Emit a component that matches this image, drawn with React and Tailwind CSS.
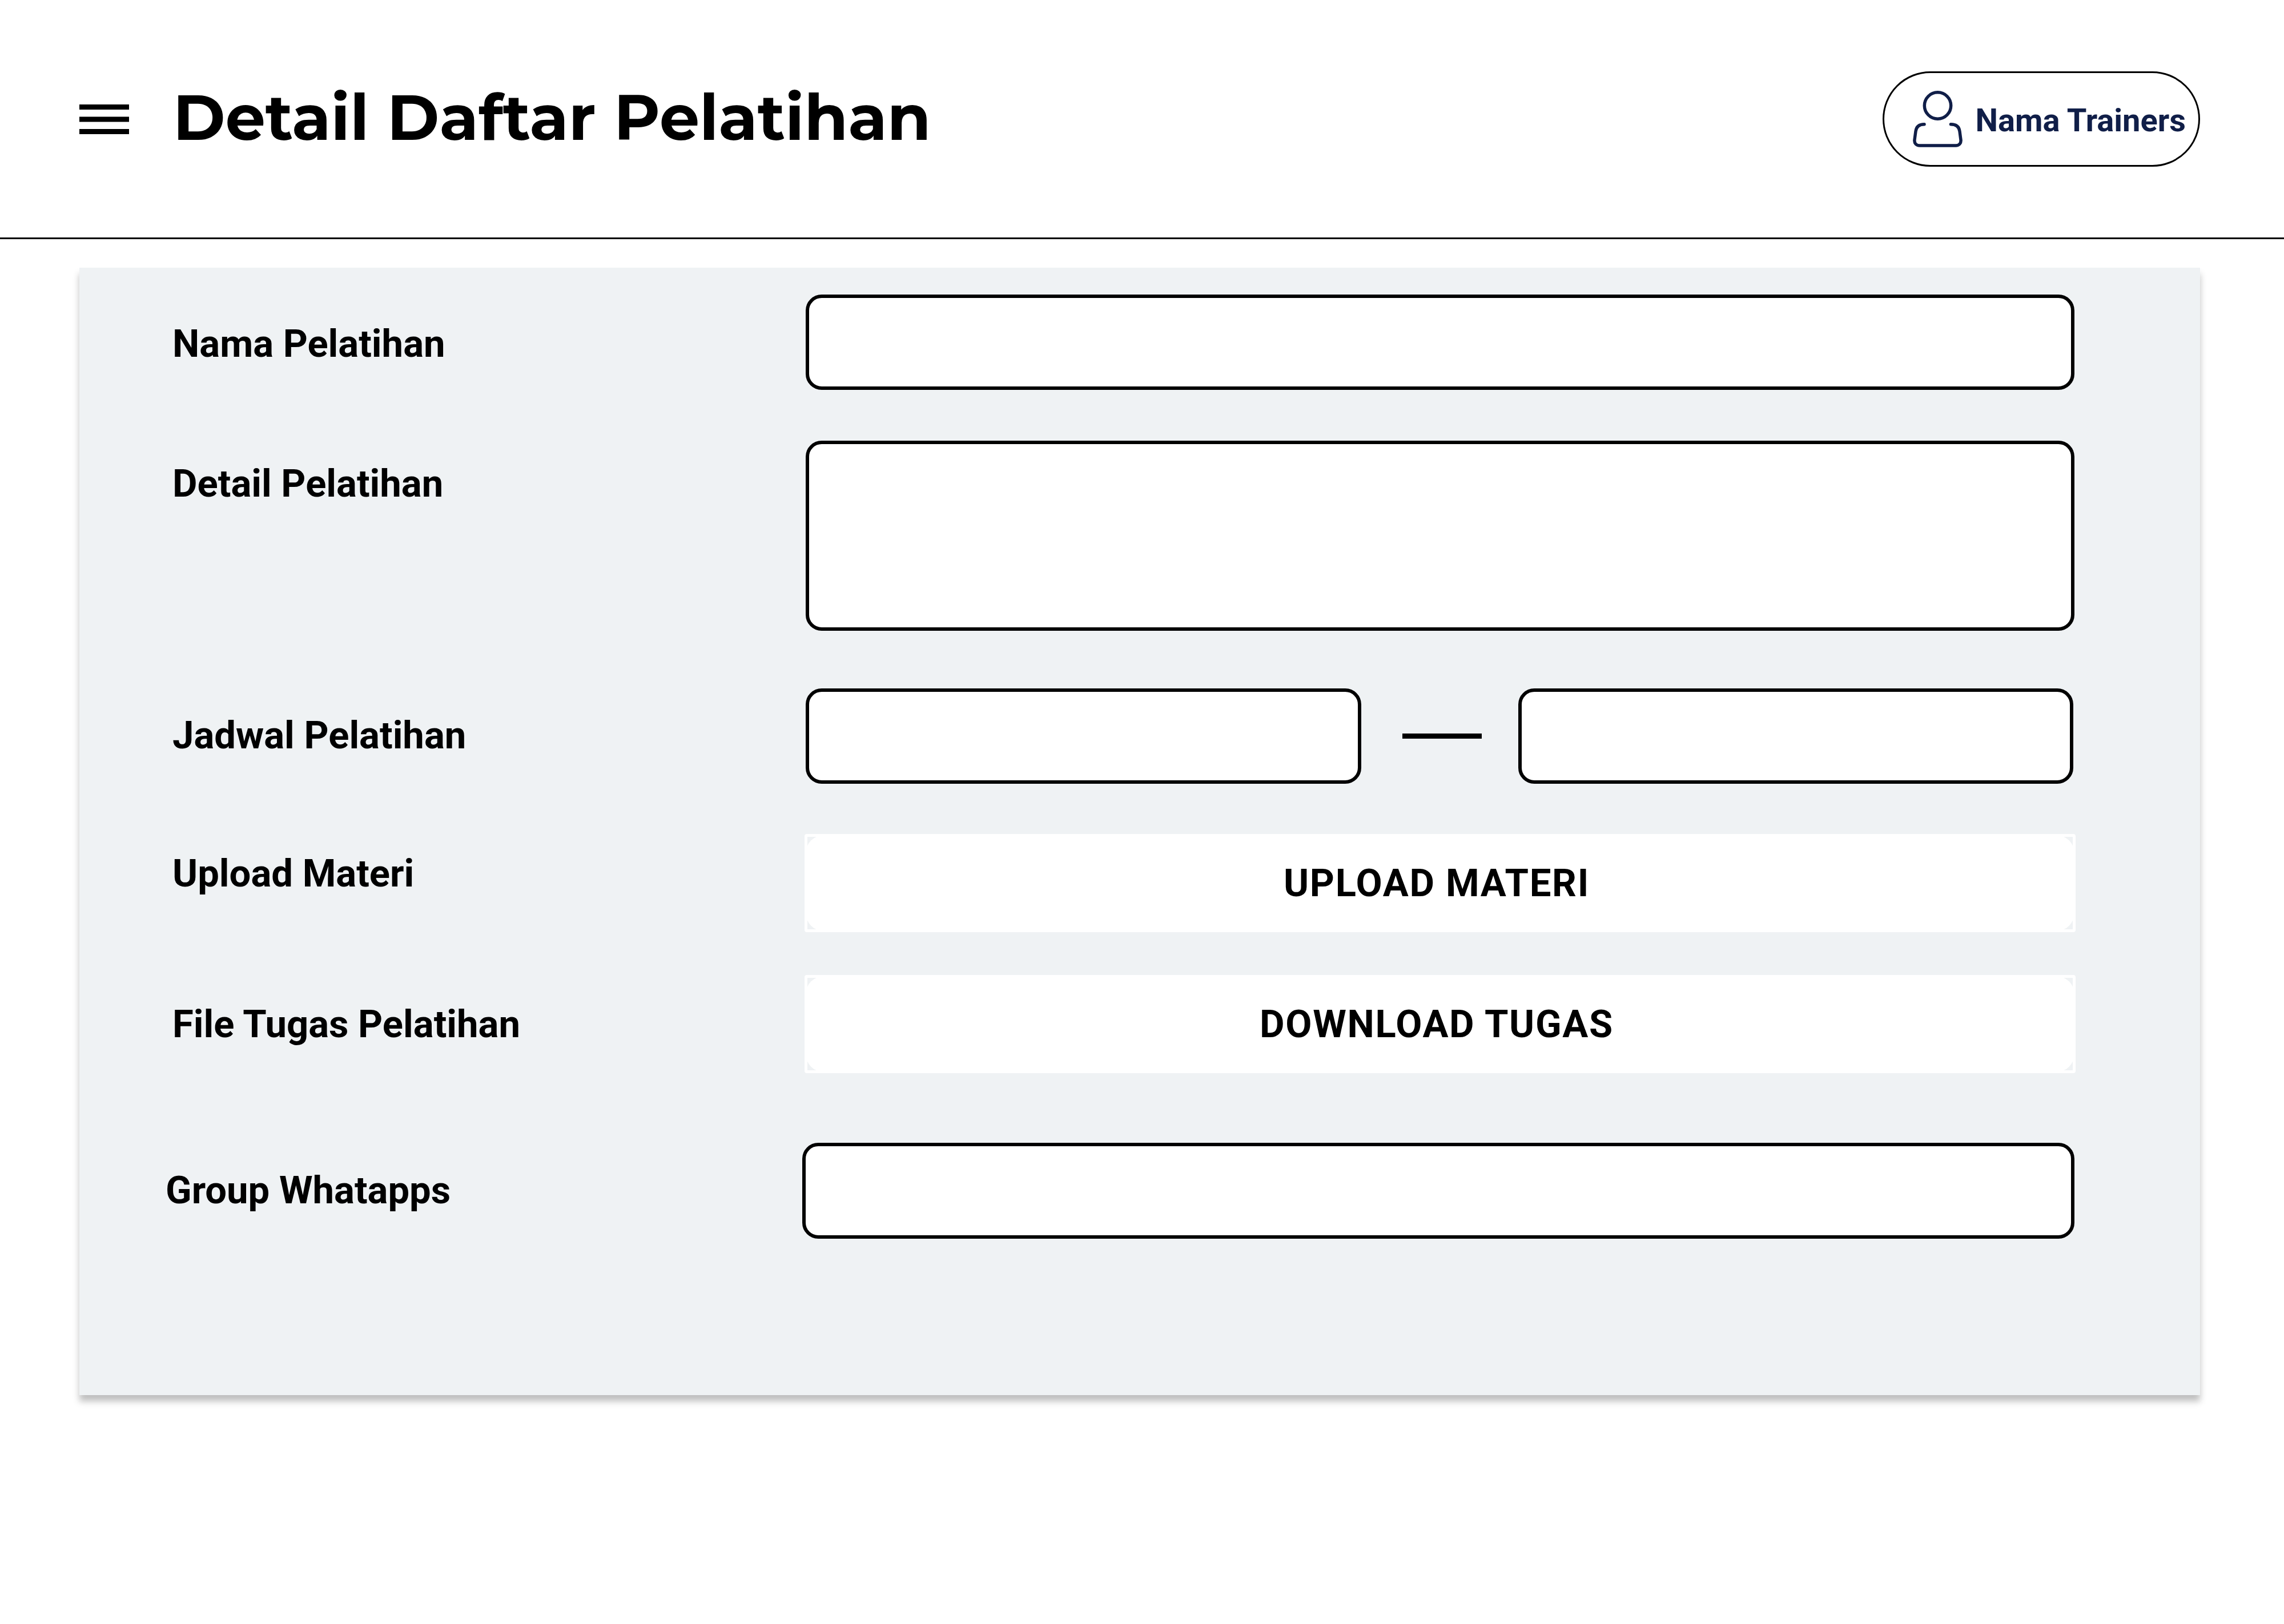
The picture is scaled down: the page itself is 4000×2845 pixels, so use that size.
function MenuIcon() {
  return (
    <svg viewBox="0 0 87 52" className="h-[52px] w-[87px]" fill="currentColor" aria-hidden="true">
      <rect width="87" height="9" />
      <rect y="21.5" width="87" height="9" />
      <rect y="43" width="87" height="9" />
    </svg>
  );
}

function UserIcon() {
  return (
    <svg
      viewBox="0 0 87 99"
      className="h-[99px] w-[87px] shrink-0"
      fill="none"
      stroke="currentColor"
      strokeWidth="5.5"
      strokeLinecap="round"
      aria-hidden="true"
    >
      <circle cx="43.5" cy="26" r="23.2" />
      <path d="M20 58.7C11 58.7 6 63 5 71L3 86C2.300 92 6 96 12 96H75C81 96 84.700 92 84 86L82 71C81 63 75.500 58.700 66.500 58.700" />
    </svg>
  );
}

const labelClass = "w-[1109px] shrink-0 text-[67px] leading-[80px] font-bold";
const boxClass = "block min-w-0 rounded-[28px] border-6 border-black bg-white px-10 text-[67px] outline-none";

function ActionButton({ id, children }) {
  return (
    <button
      id={id}
      type="button"
      className="-mx-0.5 flex h-[172px] flex-1 rounded-[4px] border-5 border-white text-[67px] leading-[80px] font-bold tracking-wide"
    >
      <span className="-m-[3px] flex flex-1 items-center justify-center self-stretch rounded-[32px] bg-white pr-3">
        {children}
      </span>
    </button>
  );
}

export default function App() {
  return (
    <div className="min-h-screen bg-white font-['Roboto',sans-serif] text-black">
      <header className="flex items-center justify-between border-b-3 border-black pt-[125px] pr-[147px] pb-[124px] pl-[139px]">
        <div className="flex items-center gap-[77px]">
          <button type="button" aria-label="Menu">
            <MenuIcon />
          </button>
          <h1 className="pb-1.5 font-['Montserrat','Inter',sans-serif] text-[111px] leading-[140px] font-bold">
            Detail Daftar Pelatihan
          </h1>
        </div>
        <button
          type="button"
          className="flex h-[167px] items-center gap-[22px] rounded-full border-3 border-black pr-[22px] pl-[50px] text-[56px] leading-[66px] font-bold text-[#101e48]"
        >
          <UserIcon />
          <span className="pt-1">Nama Trainers</span>
        </button>
      </header>

      <main className="mt-[50px] mr-[147px] ml-[139px] bg-[#eff2f4] shadow-[0_11px_11px_rgba(0,0,0,0.25)]">
        <form className="pt-[47px] pr-[220px] pb-[274px] pl-[163px]">
          <div className="flex items-start">
            <label htmlFor="nama" className={`${labelClass} mt-[46px]`}>Nama Pelatihan</label>
            <input id="nama" type="text" className={`${boxClass} h-[167px] flex-1`} />
          </div>
          <div className="mt-[89px] flex items-start">
            <label htmlFor="detail" className={`${labelClass} mt-[35px]`}>Detail Pelatihan</label>
            <textarea id="detail" className={`${boxClass} h-[333px] flex-1 resize-none py-6`} />
          </div>
          <div className="mt-[101px] flex items-start">
            <label htmlFor="mulai" className={`${labelClass} mt-[42px]`}>Jadwal Pelatihan</label>
            <div className="flex flex-1 items-center pr-0.5">
              <input id="mulai" type="text" className={`${boxClass} h-[167px] flex-1`} />
              <span className="mr-16 ml-[72px] h-[9px] w-[139px] bg-black" />
              <input id="selesai" type="text" aria-label="Jadwal selesai" className={`${boxClass} h-[167px] flex-1`} />
            </div>
          </div>
          <div className="mt-[88px] flex items-start">
            <label htmlFor="materi" className={`${labelClass} mt-[29px]`}>Upload Materi</label>
            <ActionButton id="materi">UPLOAD MATERI</ActionButton>
          </div>
          <div className="mt-[75px] flex items-start">
            <label htmlFor="tugas" className={`${labelClass} mt-[46px]`}>File Tugas Pelatihan</label>
            <ActionButton id="tugas">DOWNLOAD TUGAS</ActionButton>
          </div>
          <div className="mt-[122px] -ml-3 flex items-start">
            <label htmlFor="group" className="mt-[43px] w-[1115px] shrink-0 text-[67px] leading-[80px] font-bold">
              Group Whatapps
            </label>
            <input id="group" type="text" className={`${boxClass} h-[168px] flex-1`} />
          </div>
        </form>
      </main>
    </div>
  );
}
